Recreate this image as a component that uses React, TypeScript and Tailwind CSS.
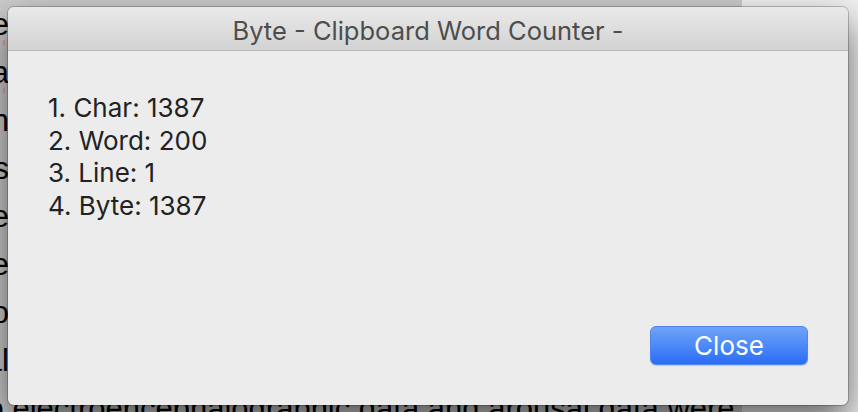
import React from "react";

const docLines = ["e", "a", "n", "s", "e", "e", "o", "al"];

export default function App() {
  return (
    <div className="relative w-[858px] h-[412px] overflow-hidden flex bg-[#f0f0f0]">
      {/* background document */}
      <div className="w-[742px] h-full bg-[#cbcbcb] relative" style={{ fontFamily: '"Liberation Sans", Arial, sans-serif' }}>
        <div className="flex flex-col text-[31px] leading-[48px] text-black pt-[1px]">
          {docLines.map((t, i) => (
            <div key={i} className="relative w-[9px] flex justify-end whitespace-nowrap">
              <span>{t}</span>
              {i < 2 && <span className="absolute left-[3px] top-[39px] w-[2px] h-[5px] bg-[#e6a0a8]" />}
            </div>
          ))}
          <div className="whitespace-nowrap ml-[-22px]">to electroencephalographic data and arousal data were</div>
        </div>
      </div>
      <div className="flex-1" />

      {/* dialog window */}
      <div
        className="absolute left-[8px] top-[7px] w-[840px] h-[398px] rounded-[6px] bg-[#ececec] flex flex-col overflow-hidden shadow-[0_0_0_1px_rgba(0,0,0,0.22),0_16px_36px_rgba(0,0,0,0.6)]"
        style={{ fontFamily: 'Inter, "Noto Sans", sans-serif' }}
      >
        <div className="h-[44px] shrink-0 bg-gradient-to-b from-[#e9e9e9] to-[#d3d3d3] border-b border-[#b8b8b8] flex items-center justify-center">
          <span className="text-[25.5px] text-[#4d4d4d] mt-[5px]">Byte - Clipboard Word Counter -</span>
        </div>
        <div className="flex-1 flex flex-col">
          <div className="pt-[41px] pl-[40px] text-[26px] leading-[32.5px] text-[#222222]">
            <div>1. Char: 1387</div>
            <div>2. Word: 200</div>
            <div>3. Line: 1</div>
            <div>4. Byte: 1387</div>
          </div>
          <div className="mt-auto flex justify-end pr-[40px] pb-[40px]">
            <button className="w-[158px] h-[39px] rounded-[6px] bg-gradient-to-b from-[#6fa3f8] to-[#2a6cf5] border border-[#4f86ee] text-white text-[26px] flex items-center justify-center shadow-[0_1px_1px_rgba(0,0,0,0.15)]">
              Close
            </button>
          </div>
        </div>
      </div>
    </div>
  );
}
